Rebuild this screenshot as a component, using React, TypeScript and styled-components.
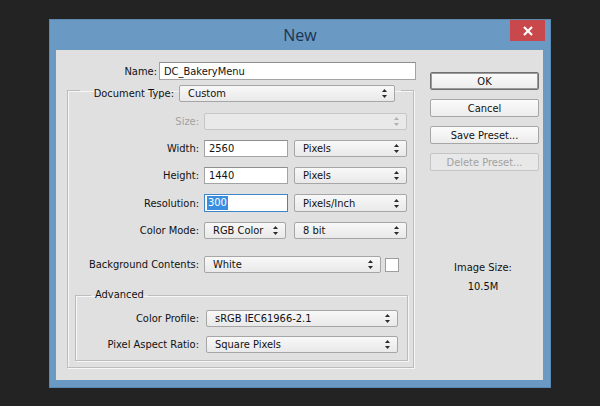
import styled, { createGlobalStyle } from "styled-components";

const GlobalStyle = createGlobalStyle`
    html, body {
        margin: 0;
        padding: 0;
        background: #232323;
    }
    body {
        font-family: "DejaVu Sans Condensed", "Liberation Sans", sans-serif;
        font-size: 11px;
        color: #111;
    }
`;

const Screen = styled.div`
    width: 600px;
    height: 406px;
    box-sizing: border-box;
    padding: 19px 0 0 49px;
`;

const Window = styled.div`
    width: 502px;
    height: 369px;
    box-sizing: border-box;
    background: #6a99c3;
    border: 1px solid #5c89b2;
    display: flex;
    flex-direction: column;
`;

const TitleBar = styled.div`
    height: 30px;
    display: grid;
    grid-template-columns: 1fr auto 1fr;
    align-items: start;
`;

const Title = styled.div`
    grid-column: 2;
    font-family: "Open Sans", "Noto Sans", sans-serif;
    font-size: 16px;
    line-height: 30px;
    color: #1b3450;
`;

const CloseButton = styled.div`
    grid-column: 3;
    justify-self: end;
    width: 35px;
    height: 21px;
    margin-right: 5px;
    background: #c8484b;
    display: flex;
    align-items: center;
    justify-content: center;
`;

const Panel = styled.div`
    height: 330px;
    margin: 0 7px 0 6px;
    background: #e0e0e0;
    display: flex;
    padding: 12px 0 0 11px;
    box-sizing: border-box;
`;

const FormColumn = styled.div`
    width: 349px;
    display: flex;
    flex-direction: column;
`;

const ButtonColumn = styled.div`
    width: 109px;
    margin-left: 14px;
    padding-top: 10px;
    display: flex;
    flex-direction: column;
    gap: 9px;
`;

const Row = styled.div`
    display: flex;
    align-items: center;
    height: ${(p: { $h?: number }) => p.$h ?? 17}px;
`;

const Label = styled.div<{ $w: number; $gap: number; $disabled?: boolean }>`
    width: ${(p) => p.$w}px;
    margin-right: ${(p) => p.$gap}px;
    text-align: right;
    white-space: nowrap;
    color: ${(p) => (p.$disabled ? "#a2a2a2" : "#111")};
`;

const TextField = styled.div<{ $w: number; $focus?: boolean }>`
    width: ${(p) => p.$w}px;
    height: 100%;
    box-sizing: border-box;
    background: #fff;
    border: 1px solid ${(p) => (p.$focus ? "#3d86c8" : "#a3a3a3")};
    border-top-color: ${(p) => (p.$focus ? "#3d86c8" : "#8e8e8e")};
    padding: 0 4px;
    display: flex;
    align-items: center;
    white-space: nowrap;
`;

const Selected = styled.span`
    background: #3a8ee0;
    color: #fff;
    line-height: 14px;
    padding: 0 1px;
    margin-left: -2px;
`;

const Select = styled.div<{ $w: number; $disabled?: boolean; $ml?: number }>`
    width: ${(p) => p.$w}px;
    height: 100%;
    margin-left: ${(p) => p.$ml ?? 0}px;
    box-sizing: border-box;
    border: 1px solid ${(p) => (p.$disabled ? "#c6c6c6" : "#a6a6a6")};
    border-radius: 2px;
    background: ${(p) =>
        p.$disabled ? "#e9e9e9" : "linear-gradient(#f8f8f8, #e9e9e9)"};
    padding: 0 7px 0 8px;
    display: flex;
    align-items: center;
    justify-content: space-between;
    white-space: nowrap;
    color: #111;
`;

const Swatch = styled.div`
    width: 14px;
    height: 14px;
    margin-left: 4px;
    box-sizing: border-box;
    background: #fff;
    border: 1px solid #9d9d9d;
`;

const Group = styled.fieldset<{ $mt: number; $ml: number; $w: number; $pb: number; $mb: number }>`
    margin: ${(p) => p.$mt}px 0 ${(p) => p.$mb}px ${(p) => p.$ml}px;
    width: ${(p) => p.$w}px;
    box-sizing: border-box;
    padding: 0 0 ${(p) => p.$pb}px 0;
    border: 1px solid #bcbcbc;
    box-shadow: 1px 1px 0 #f6f6f6, inset 1px 1px 0 #f6f6f6;
    min-inline-size: 0;
`;

const Legend = styled.legend<{ $ml: number; $pt: number }>`
    margin-left: ${(p) => p.$ml}px;
    padding: ${(p) => p.$pt}px 6px 0 6px;
    display: flex;
    align-items: center;
    height: ${(p) => p.$pt + 17}px;
    box-sizing: border-box;
`;

const AdvLegend = styled.legend`
    margin-left: 15px;
    padding: 0 4px;
    line-height: 14px;
`;

const Rows = styled.div<{ $mt: number; $gap: number }>`
    display: flex;
    flex-direction: column;
    gap: ${(p) => p.$gap}px;
    margin-top: ${(p) => p.$mt}px;
`;

const Button = styled.div<{ $default?: boolean; $disabled?: boolean }>`
    height: 18px;
    box-sizing: border-box;
    border: 1px solid ${(p) => (p.$default ? "#6f6f6f" : p.$disabled ? "#c4c4c4" : "#a6a6a6")};
    box-shadow: ${(p) => (p.$default ? "inset 0 0 0 1px #9a9a9a" : "none")};
    border-radius: 2px;
    background: ${(p) => (p.$disabled ? "#e8e8e8" : "linear-gradient(#fbfbfb, #ececec)")};
    color: ${(p) => (p.$disabled ? "#a2a2a2" : "#111")};
    display: flex;
    align-items: center;
    justify-content: center;
`;

const SizeInfo = styled.div`
    margin-top: 78px;
    margin-left: -3px;
    text-align: center;
    line-height: 19px;
`;

function Arrows({ disabled }: { disabled?: boolean }) {
    const c = disabled ? "#b0b0b0" : "#2a2a2a";
    return (
        <svg width="5" height="9" viewBox="0 0 5 9">
            <path d="M2.5 0 L5 3 L0 3 Z" fill={c} />
            <path d="M0 6 L5 6 L2.5 9 Z" fill={c} />
        </svg>
    );
}

function Dropdown(props: { w: number; value?: string; disabled?: boolean; ml?: number }) {
    return (
        <Select $w={props.w} $disabled={props.disabled} $ml={props.ml}>
            <span>{props.value}</span>
            <Arrows disabled={props.disabled} />
        </Select>
    );
}

export default function App() {
    return (
        <Screen>
            <GlobalStyle />
            <Window>
                <TitleBar>
                    <Title>New</Title>
                    <CloseButton>
                        <svg width="10" height="10" viewBox="0 0 10 10">
                            <path d="M1 1 L9 9 M9 1 L1 9" stroke="#fff" strokeWidth="2.2" />
                        </svg>
                    </CloseButton>
                </TitleBar>
                <Panel>
                    <FormColumn>
                        <Row $h={18}>
                            <Label $w={90} $gap={2}>Name:</Label>
                            <TextField $w={257}>DC_BakeryMenu</TextField>
                        </Row>

                        <Group $mt={-1} $ml={0} $w={347} $pb={0} $mb={0}>
                            <Legend $ml={12} $pt={6}>
                                <Label $w={88} $gap={5}>Document Type:</Label>
                                <Dropdown w={216} value="Custom" />
                            </Legend>

                            <Rows $mt={11} $gap={10}>
                                <Row>
                                    <Label $w={131} $gap={5} $disabled>Size:</Label>
                                    <Dropdown w={203} disabled />
                                </Row>
                                <Row>
                                    <Label $w={131} $gap={5}>Width:</Label>
                                    <TextField $w={84}>2560</TextField>
                                    <Dropdown w={113} ml={6} value="Pixels" />
                                </Row>
                                <Row>
                                    <Label $w={131} $gap={5}>Height:</Label>
                                    <TextField $w={84}>1440</TextField>
                                    <Dropdown w={113} ml={6} value="Pixels" />
                                </Row>
                                <Row $h={18}>
                                    <Label $w={131} $gap={5}>Resolution:</Label>
                                    <TextField $w={84} $focus>
                                        <Selected>300</Selected>
                                    </TextField>
                                    <Dropdown w={113} ml={6} value="Pixels/Inch" />
                                </Row>
                                <Row>
                                    <Label $w={131} $gap={5}>Color Mode:</Label>
                                    <Dropdown w={82} value="RGB Color" />
                                    <Dropdown w={113} ml={8} value="8 bit" />
                                </Row>
                            </Rows>

                            <Rows $mt={17} $gap={0}>
                                <Row>
                                    <Label $w={131} $gap={5}>Background Contents:</Label>
                                    <Dropdown w={177} value="White" />
                                    <Swatch />
                                </Row>
                            </Rows>

                            <Group $mt={15} $ml={7} $w={333} $pb={7} $mb={6}>
                                <AdvLegend>Advanced</AdvLegend>
                                <Rows $mt={8} $gap={9}>
                                    <Row $h={17}>
                                        <Label $w={123} $gap={7}>Color Profile:</Label>
                                        <Dropdown w={192} value="sRGB IEC61966-2.1" />
                                    </Row>
                                    <Row $h={17}>
                                        <Label $w={123} $gap={7}>Pixel Aspect Ratio:</Label>
                                        <Dropdown w={192} value="Square Pixels" />
                                    </Row>
                                </Rows>
                            </Group>
                        </Group>
                    </FormColumn>

                    <ButtonColumn>
                        <Button $default>OK</Button>
                        <Button>Cancel</Button>
                        <Button>Save Preset...</Button>
                        <Button $disabled>Delete Preset...</Button>
                        <SizeInfo>
                            <div>Image Size:</div>
                            <div>10.5M</div>
                        </SizeInfo>
                    </ButtonColumn>
                </Panel>
            </Window>
        </Screen>
    );
}
